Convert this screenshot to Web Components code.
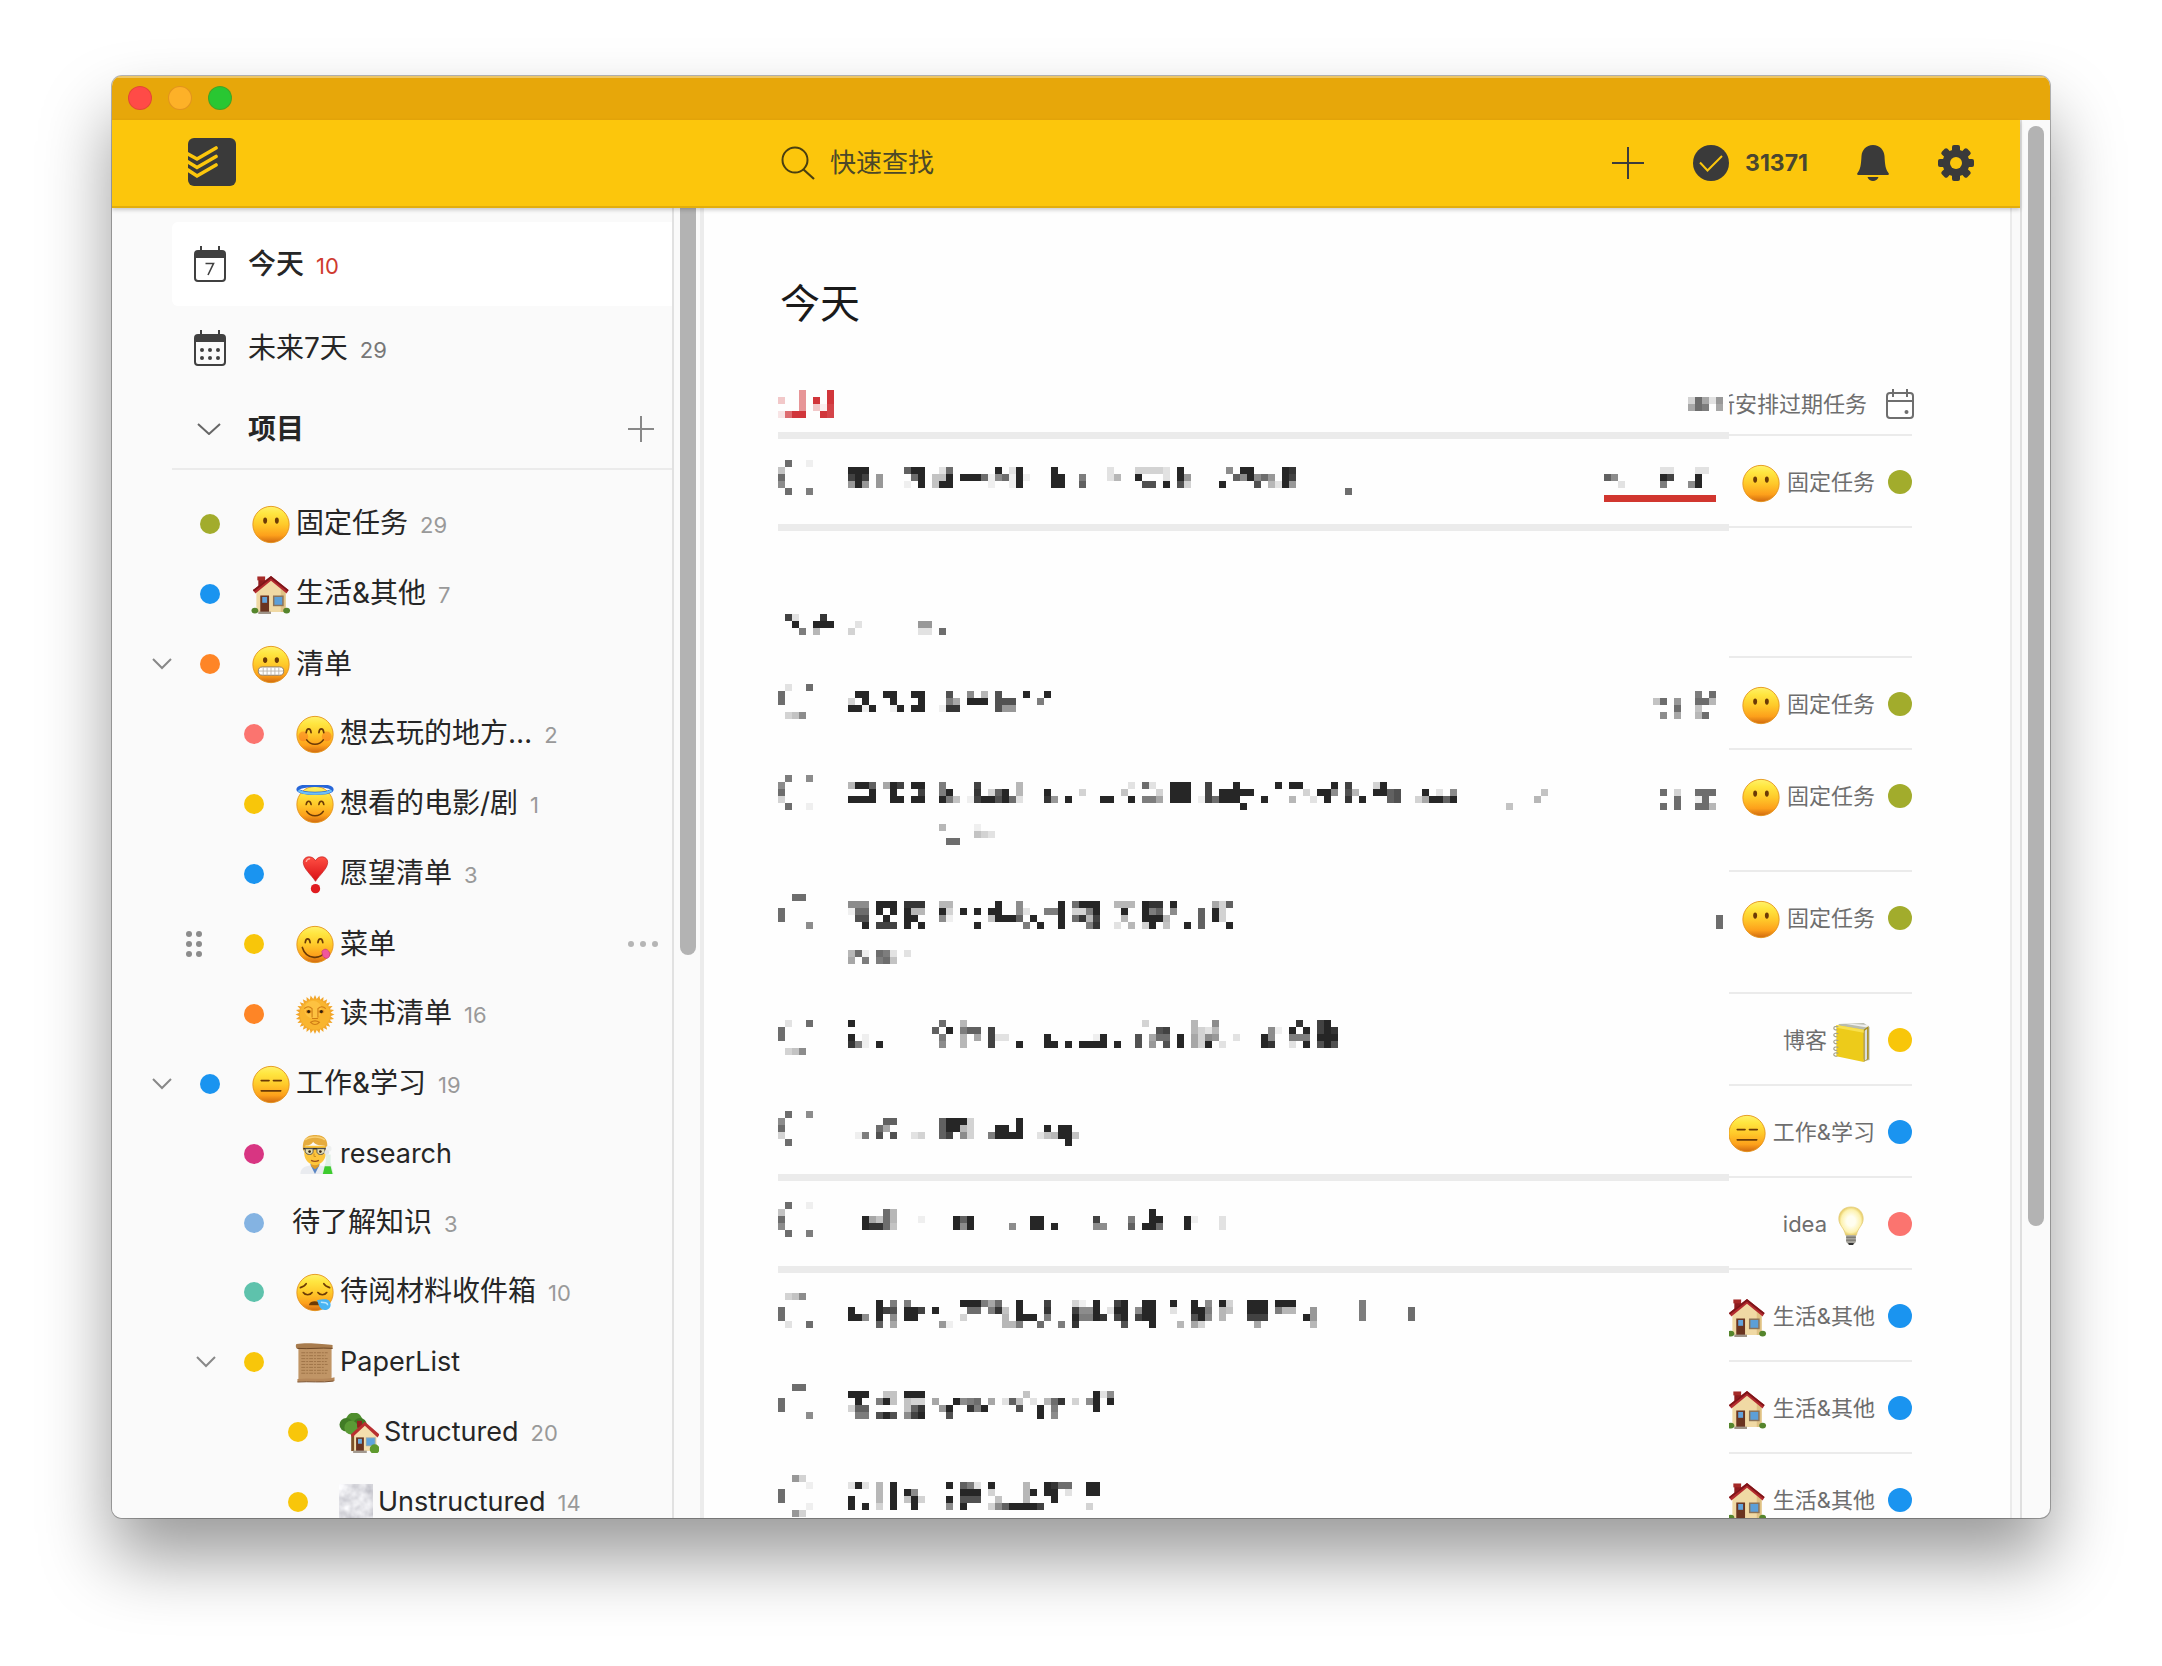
<!DOCTYPE html>
<html lang="zh-CN">
<head>
<meta charset="utf-8">
<title>今天</title>
<style>
  html { height: 100%; }
  body {
    margin: 0; box-sizing: border-box; height: 100vh; padding: 76px 112px 148px;
    display: flex; background: #fff; color: #262626; overflow: hidden;
    font: 28px/40px Inter, "Noto Sans CJK SC", sans-serif;
  }
</style>
</head>
<body>
<app-window>
  <app-header slot="header"></app-header>
  <side-bar slot="side">
    <nav-item current icon="today" count="10">今天</nav-item>
    <nav-item icon="week" count="29">未来7天</nav-item>
    <project-heading>项目</project-heading>
    <project-item color="#a2ac2c" emoji="blank" count="29">固定任务</project-item>
    <project-item color="#1a94f0" emoji="house" count="7">生活&amp;其他</project-item>
    <project-item color="#fe8526" emoji="grimace" open>清单</project-item>
    <project-item level="1" color="#fb746f" emoji="smile" count="2">想去玩的地方…</project-item>
    <project-item level="1" color="#f8c60a" emoji="angel" count="1">想看的电影/剧</project-item>
    <project-item level="1" color="#1a94f0" emoji="heart" count="3">愿望清单</project-item>
    <project-item level="1" color="#f8c60a" emoji="yum" hover>菜单</project-item>
    <project-item level="1" color="#fe8526" emoji="sun" count="16">读书清单</project-item>
    <project-item color="#1a94f0" emoji="dash" count="19" open>工作&amp;学习</project-item>
    <project-item level="1" color="#d83582" emoji="scientist" latin>research</project-item>
    <project-item level="1" color="#84b3e2" count="3" plain>待了解知识</project-item>
    <project-item level="1" color="#5ec2ac" emoji="sleepy" count="10">待阅材料收件箱</project-item>
    <project-item level="1" color="#f8c60a" emoji="scroll" latin open>PaperList</project-item>
    <project-item level="2" color="#f8c60a" emoji="garden" count="20" latin>Structured</project-item>
    <project-item level="2" color="#f8c60a" emoji="fog" count="14" latin>Unstructured</project-item>
  </side-bar>
  <task-board slot="main"></task-board>
</app-window>

<script>
const face = (inner, defs = '') => `
  <defs><linearGradient id="f" x1="0" y1="0" x2="0" y2="1"><stop offset="0" stop-color="#fff16a"/><stop offset=".2" stop-color="#ffe640"/><stop offset=".5" stop-color="#ffc92a"/><stop offset=".8" stop-color="#fda01b"/><stop offset="1" stop-color="#d06a10"/></linearGradient>${defs}</defs>
  <circle cx="20" cy="20" r="18.6" fill="url(#f)" stroke="#e39219" stroke-width=".9"/>${inner}`;
const brown = 'fill="none" stroke="#6b3a06" stroke-width="1.7" stroke-linecap="round"';
const house = `
  <path d="M7 5h7v9l-7 5z" fill="#8e1c1f"/><path d="M6 1.500h8v4H6z" fill="#a52a28"/>
  <path d="M5 17 20 4l15 13v21H5z" fill="#f0d9a4"/><path d="M30 14l5 4v20h-5z" fill="#dfc184"/>
  <path d="M20 1 38 15.500 36 19 20 6 4 19 1.500 15.500z" fill="#b32a2e"/><path d="M20 1 38 15.500l-.8 1.500L20 3.500 2.400 17l-.9-1.500z" fill="#7e1519"/>
  <path d="M9 21h9v17H9z" fill="#6a3420"/><path d="M11 22.500h5v6h-5z" fill="#62a3dc"/><path d="M22 21h11v11H22z" fill="#8c7358"/><path d="M23.500 22.500h8v8h-8z" fill="#5c9fd8"/>
  <path d="M7 37.500h13V40H7z" fill="#9f9488"/><ellipse cx="3.500" cy="36.500" rx="3.500" ry="3" fill="#55852c"/><ellipse cx="36" cy="36.500" rx="3.500" ry="3" fill="#55852c"/>`;
const EMOJI = {
  blank: face('<ellipse cx="14" cy="16" rx="2" ry="3.200" fill="#6b3a06"/><ellipse cx="26" cy="16" rx="2" ry="3.200" fill="#6b3a06"/>'),
  dash: face(`<path d="M10 16h8M22.500 16h8M10 26.500h20" ${brown}/>`),
  grimace: face(`<ellipse cx="14" cy="15.500" rx="2.200" ry="2.900" fill="#6b3a06"/><ellipse cx="26" cy="15.500" rx="2.200" ry="2.900" fill="#6b3a06"/>
    <rect x="7" y="22.500" width="26" height="8.500" rx="4.200" fill="#fff" stroke="#8d7c68"/><path d="M7.500 26.700h25M12 23v8M16 23v8M20 23v8M24 23v8M28 23v8" stroke="#b9b4ac" stroke-width=".9"/>`),
  smile: face(`<circle cx="8" cy="22" r="5" fill="#f86a1f" opacity=".45"/><circle cx="32" cy="22" r="5" fill="#f86a1f" opacity=".45"/>
    <path d="M11 18c.6-5 4.400-5 5 0M24 18c.6-5 4.400-5 5 0M11.500 25.500c4 6 13 6 17 0" ${brown}/>`),
  angel: face(`<path d="M11 20c.6-4.500 4.400-4.500 5 0M24 20c.6-4.500 4.400-4.500 5 0M11.500 27c4 6 13 6 17 0" ${brown}/>
    <ellipse cx="20" cy="4.500" rx="17.500" ry="4" fill="none" stroke="#2766d8" stroke-width="3.200"/><path d="M3 5.500c5 4.500 29 4.500 34 0" fill="none" stroke="#6cc0f7" stroke-width="2.400"/>`),
  yum: face(`<path d="M10 18c.6-5 4.400-5 5 0M23 18c.6-5 4.400-5 5 0M7 23c4 13 20 13 24 3" ${brown}/><path d="M27 27c3-4 7-2 8 2 1 5-4 7-7 3z" fill="#f0579c" stroke="#c93478" stroke-width=".7"/>`),
  sleepy: face(`<path d="M8 20c2 3 7 3 9 0M23 20c2 3 7 3 9 0M5 15c3-1 5-2 6-4M35 15c-3-1-5-2-6-4" ${brown}/><path d="M14 32c1-4 9-4 12-1v2H14z" fill="#6b3a06"/><path d="M22 28c6-1 11-2 13 1 3 6-1 9-5 9-5 0-6-5-8-10z" fill="#49b4f2"/><path d="M26 30c4 0 7 0 7 3" fill="none" stroke="#b8e6ff" stroke-width="1.500"/>`),
  heart: `<defs><linearGradient id="h" x1="0" y1="0" x2="0" y2="1"><stop offset="0" stop-color="#ff5044"/><stop offset="1" stop-color="#d80e14"/></linearGradient></defs>
    <path d="M20.500 27C16 20 8 14 8 7.500 8 .5 18 0 20.500 6 23 0 33 .5 33 7.500 33 14 25 20 20.500 27z" fill="url(#h)" stroke="#c21a1a" stroke-width=".7"/><circle cx="20.500" cy="34.500" r="4.800" fill="#e01b1f"/><path d="M11 7c.4-2 2-3.400 4-3" stroke="#ffb0a4" stroke-width="1.500" fill="none"/>`,
  sun: `<path d="${Array.from({length: 56}, (_, i) => { const a = i * Math.PI / 28, r = i % 2 ? 16 : 20; return (i ? 'L' : 'M') + (20 + r * Math.sin(a)).toFixed(1) + ' ' + (20 - r * Math.cos(a)).toFixed(1); }).join('')}z" fill="#f2a62a"/><circle cx="20" cy="20" r="15.500" fill="#f9b52f"/><circle cx="18" cy="15" r="9" fill="#ffcb4e" opacity=".6"/>
    <ellipse cx="13.500" cy="17" rx="3" ry="2" fill="#e08c1c"/><ellipse cx="26.500" cy="17" rx="3" ry="2" fill="#e08c1c"/><circle cx="13.500" cy="17" r="1.600" fill="#33210c"/><circle cx="26.500" cy="17" r="1.600" fill="#33210c"/><path d="M9 14c3-3 6-2 8 0v9M31 14c-3-3-6-2-8 0v9M17 24h6M15.500 28c3-2 6-2 9 0-3 3-6 3-9 0z" fill="none" stroke="#cf7c15" stroke-width="1.100"/>`,
  scientist: `<path d="M5 40c0-7 6-9 15-9s14 2 14 9z" fill="#e9ebef"/><path d="M15 30h10l-5 10z" fill="#5b86c4"/><path d="M16 26h8v6l-4 3-4-3z" fill="#dd9a28"/>
    <path d="M9 11h22v8c0 7-6 12-11 12S9 26 9 19z" fill="#fcc53c"/><path d="M8 17C6 4 12 0 20 0s15 3 12 17l-2-6c-6 0-10-1-12-4-1 3-5 4-8 4z" fill="#e6ac3e"/><path d="M10 5c5-4 15-4 20 0" fill="none" stroke="#f8d075" stroke-width="1.500"/>
    <path d="M8 14h24" stroke="#2b2d33" stroke-width="1.600"/><path d="M10 14h8v3c0 4-7 4-8 0zM22 14h8v3c-1 4-8 4-8 0z" fill="#e0dcb0" stroke="#484a50" stroke-width=".9"/><circle cx="14.500" cy="17" r="1.400" fill="#3e2817"/><circle cx="25.500" cy="17" r="1.400" fill="#3e2817"/><path d="M16 26c2 1 6 1 8 0" stroke="#9b4e16" stroke-width="1.400" fill="none"/><path d="M19 19v3h2" stroke="#c88b1e" fill="none"/>
    <path d="M31 20h5v8l3 12H27l4-12z" fill="#dbeee2" opacity=".9"/><path d="M30 32h6l2 8H28z" fill="#3ecb2f"/><circle cx="34" cy="14" r="3" fill="#eef0f0"/><circle cx="32" cy="18" r="2.500" fill="#e3e6e6"/>`,
  scroll: `<path d="M3 4h34v33H3z" fill="#c09566"/><path d="M1 1c10-2 30 0 37 1v4C26 4 12 7 2 6 0 5 0 2 1 1z" fill="#a87c4e"/><path d="M2 5.500c12 1 24-1 36 0" stroke="#6c4726" fill="none"/>
    <path d="M2 37c12-2 24 1 35-1l3-1v4c-12 2-26 0-38 1z" fill="#b5875a"/><path d="M2 40c12-1 25 1 37-1" stroke="#7a5230" fill="none"/><path d="M6 10h27M6 13h25M6 16h27M6 19h26M6 22h27M6 25h24M6 28h27M6 31h26" stroke="#9a7045" stroke-width=".9" stroke-dasharray="4 1 2 1"/>`,
  garden: `<path d="M12 18h5v21h-5z" fill="#7c5227"/><circle cx="15" cy="8" r="8.500" fill="#4f8e2d"/><circle cx="7" cy="12" r="7" fill="#417c26"/><circle cx="21" cy="12" r="7" fill="#3f7823"/><circle cx="12" cy="15" r="7" fill="#5a9a35"/>
    <path d="M15 22 26 11l12 12v16H15z" fill="#f5dfae"/><path d="M18 8h5v7h-5z" fill="#94201f"/><path d="M26 9 41 22l-2 3-13-12-13 12-1.500-3z" fill="#b92f30"/><path d="M17 25h8v14h-8z" fill="#6a3420"/><path d="M19 26.500h4v5h-4z" fill="#6ba9dd"/><path d="M27 25h10v9H27z" fill="#94a9b4"/><path d="M28 26h8v7h-8z" fill="#5fa4dc"/><circle cx="36" cy="37" r="5" fill="#5f9a2e"/><path d="M14 38.500h14V41H14z" fill="#a39a90"/>`,
  fog: `<defs><filter id="b" x="0" y="0" width="1" height="1"><feTurbulence type="fractalNoise" baseFrequency=".07" numOctaves="3" seed="4"/><feColorMatrix values=".8 0 0 0 .38 .8 0 0 0 .38 .75 0 0 0 .44 0 0 0 0 1"/></filter></defs><rect x="0" y="2" width="34" height="38" filter="url(#b)"/>`,
  book: `<path d="M7 2 33 1l6 4v34l-5 1z" fill="#b9bcae"/><path d="M9 1l29 2v3z" fill="#eee"/><path d="M5 3l28 5v33L5 35z" fill="#edcb1a"/><path d="M33 8l5-4v34l-5 3z" fill="#a98d19"/><path d="M34 9l2.500-2v31L34 40z" fill="#d9dde0"/><path d="M5 3l28 5v3L5 6z" fill="#f8e04e"/>
    <path d="M7 5c-6-2-6 4-1 3M7 12c-6-2-6 4-1 3M7 19c-6-2-6 4-1 3M7 26c-6-2-6 4-1 3M7 32c-6-2-6 4-1 3" stroke="#a5a28c" stroke-width="1.200" fill="none"/>`,
  bulb: `<defs><radialGradient id="g"><stop offset=".35" stop-color="#fffef0"/><stop offset=".8" stop-color="#fdf2b0"/><stop offset="1" stop-color="#e9cf6c"/></radialGradient></defs>
    <path d="M20 1c8 0 12.500 5.500 12.500 12 0 7-5.500 9-7 17h-11c-1.500-8-7-10-7-17C7.500 6.500 12 1 20 1z" fill="url(#g)" stroke="#e4cd7c" stroke-width=".8"/><path d="M15 30h10v7l-3 3h-4l-3-3z" fill="#a5a39c"/><path d="M15 32h10M15 35h10" stroke="#6d6b66"/><path d="M17 38h6l-1 2h-4z" fill="#333"/>`,
  house
};

const ICONS = {
  today: '<svg width="32" height="36" viewBox="0 0 32 36"><path d="M7 0v6M25 0v6" stroke="#404040" stroke-width="2"/><rect x="1" y="5" width="30" height="30" rx="3" fill="none" stroke="#404040" stroke-width="2"/><path d="M1 5h30v7H1z" fill="#404040"/><path d="M11.500 17.500h8L14 29" fill="none" stroke="#404040" stroke-width="1.600"/></svg>',
  week: '<svg width="32" height="36" viewBox="0 0 32 36"><path d="M7 0v6M25 0v6" stroke="#404040" stroke-width="2"/><rect x="1" y="5" width="30" height="30" rx="3" fill="none" stroke="#404040" stroke-width="2"/><path d="M1 5h30v7H1z" fill="#404040"/><g fill="#404040"><circle cx="8" cy="20" r="2"/><circle cx="16" cy="20" r="2"/><circle cx="24" cy="20" r="2"/><circle cx="8" cy="28" r="2"/><circle cx="16" cy="28" r="2"/><circle cx="24" cy="28" r="2"/></g></svg>',
  chevron: '<svg width="24" height="12" viewBox="0 0 24 12"><path d="M1 1l11 10L23 1" fill="none" stroke="#666" stroke-width="2"/></svg>',
  chevronSmall: '<svg width="20" height="12" viewBox="0 0 20 12"><path d="M1 1l9 9 9-9" fill="none" stroke="#888" stroke-width="2"/></svg>',
  add: '<svg width="26" height="26" viewBox="0 0 26 26"><path d="M13 0v26M0 13h26" stroke="#888" stroke-width="2"/></svg>'
};

const BASE = `<style>
  :host, *, *::before { box-sizing: border-box; }
  button { appearance: none; background: none; border: 0; padding: 0; margin: 0; font: inherit; color: inherit; display: flex; align-items: center; }
  a { color: inherit; text-decoration: none; }
  svg { display: block; flex: none; }
</style>`;

class Base extends HTMLElement {
  connectedCallback() {
    if (this.shadowRoot) return;
    this.attachShadow({ mode: 'open' }).innerHTML = BASE + this.render();
  }
}

customElements.define('emoji-icon', class extends Base {
  render() {
    const name = this.getAttribute('name'), w = name === 'fog' ? 34 : 40;
    return `<style>:host{display:block;flex:none;width:${w}px;height:40px}</style>
      <svg width="${w}" height="40" viewBox="0 0 ${w} 41" role="img">${EMOJI[name]}</svg>`;
  }
});

customElements.define('app-window', class extends Base {
  render() {
    return `<style>
      :host { display: flex; flex-direction: column; flex: 1; min-width: 0; overflow: hidden; border-radius: 10px; background: #fafafa;
        box-shadow: 0 0 0 1px rgba(0,0,0,.28), 0 40px 70px rgba(0,0,0,.4); }
      .title { height: 44px; flex: none; display: flex; align-items: center; gap: 16px; padding: 0 0 2px 16px; background: #e7a70a; border-top: 2px solid #efc765; }
      .title button { width: 24px; height: 24px; border-radius: 50%; border: 1px solid rgba(150,60,0,.25); }
      .body { flex: 1; min-height: 0; display: flex; }
      .page { flex: 1; min-width: 0; display: flex; flex-direction: column; }
      .columns { flex: 1; min-height: 0; display: flex; }
      .track { width: 30px; flex: none; padding: 6px 6px 0; border-left: 2px solid #dfdfdf; }
      .thumb { width: 16px; height: 79%; border-radius: 8px; background: #b3b3b3; }
    </style>
    <div class="title">
      <button aria-label="关闭" style="background:#ff4b47"></button>
      <button aria-label="最小化" style="background:#fdb128"></button>
      <button aria-label="缩放" style="background:#29c732"></button>
    </div>
    <div class="body">
      <div class="page"><slot name="header"></slot><div class="columns"><slot name="side"></slot><slot name="main"></slot></div></div>
      <div class="track"><div class="thumb"></div></div>
    </div>`;
  }
});

customElements.define('app-header', class extends Base {
  render() {
    const teeth = Array.from({ length: 8 }, (_, i) => `<rect x="14" y="0" width="8" height="8" rx="2" transform="rotate(${i * 45} 18 18)"/>`).join('');
    return `<style>
      :host { display: flex; flex: none; height: 88px; align-items: center; background: #fcc60c; border-bottom: 2px solid #e3ae0b; position: relative;
        box-shadow: 0 2px 4px rgba(0,0,0,.2); color: #3c3c3c; }
      .brand { width: 592px; flex: none; padding: 0 0 2px 76px; }
      .search { flex: 1; display: flex; align-items: center; gap: 15px; padding-left: 77px; min-width: 0; }
      input { appearance: none; border: 0; background: none; outline: 0; padding: 0; width: 400px; height: 40px; font: 26px/40px Inter, "Noto Sans CJK SC", sans-serif; color: #4c4828; }
      input::placeholder { color: #4c4828; opacity: 1; }
      .tools { display: flex; align-items: center; gap: 49px; padding-right: 46px; }
      .karma { gap: 16px; font-size: 23px; font-weight: 700; color: #4a4630; }
    </style>
    <a class="brand" href="#home" aria-label="主页"><svg width="48" height="48" viewBox="0 0 48 48"><rect width="48" height="48" rx="6" fill="#3a3a3a"/>
      <g fill="none" stroke="#fcc60c" stroke-width="3.600" stroke-linecap="round"><path d="M0 16l9 5 19-11M0 24l9 5.500 19-11M0 32l9 6 19-11"/></g></svg></a>
    <label class="search"><svg width="34" height="34" viewBox="0 0 34 34" aria-hidden="true"><circle cx="14" cy="14" r="12.500" fill="none" stroke="#4a3f10" stroke-width="2"/><path d="M22.500 23.500L33 33" stroke="#4a3f10" stroke-width="2.200"/></svg>
      <input type="text" placeholder="快速查找" aria-label="快速查找"></label>
    <div class="tools">
      <button aria-label="添加任务"><svg width="32" height="32" viewBox="0 0 32 32"><path d="M16 0v32M0 16h32" stroke="#3c3c3c" stroke-width="2"/></svg></button>
      <button class="karma"><svg width="36" height="36" viewBox="0 0 36 36"><circle cx="18" cy="18" r="18" fill="#3a3a3a"/><path d="M7 17.500l7.500 8L29 11" fill="none" stroke="#fcc60c" stroke-width="2"/></svg>31371</button>
      <button aria-label="通知"><svg width="32" height="36" viewBox="0 0 32 36" fill="#3a3a3a"><path d="M16 0c7 0 11 5 11.500 11 .5 9 1 13 4 17 .8 1.200.3 2-.8 2H1.300c-1.100 0-1.600-.8-.8-2 3-4 3.500-8 4-17C5 5 9 0 16 0zM10.500 32h11c-1.500 5.300-9.500 5.300-11 0z"/></svg></button>
      <button aria-label="设置"><svg width="36" height="36" viewBox="0 0 36 36"><g fill="#3a3a3a">${teeth}<circle cx="18" cy="18" r="13.500"/></g><circle cx="18" cy="18" r="6" fill="#fcc60c"/></svg></button>
    </div>`;
  }
});

customElements.define('side-bar', class extends Base {
  render() {
    return `<style>
      :host { display: flex; flex: none; width: 592px; background: #fafafa; overflow: hidden; }
      nav { flex: 1; min-width: 0; padding-top: 14px; }
      .track { width: 32px; flex: none; padding-left: 6px; border-left: 2px solid #e1e1e1; border-right: 4px solid #ececec; }
      .thumb { width: 16px; height: 57%; border-radius: 0 0 8px 8px; background: #b3b3b3; }
    </style><nav aria-label="项目"><slot></slot></nav><div class="track"><div class="thumb"></div></div>`;
  }
});

customElements.define('nav-item', class extends Base {
  render() {
    return `<style>
      :host { display: block; padding-left: 60px; }
      a { display: flex; align-items: center; height: 84px; padding: 0 0 0 22px; border-radius: 6px 0 0 6px; gap: 22px; }
      :host([current]) a { background: #fff; font-weight: 500; }
      span { display: flex; align-items: baseline; gap: 12px; padding-top: 2px; }
      b { font-size: 22px; font-weight: 400; color: #777; }
      :host([current]) b { color: #cf3a2f; }
    </style><a href="#${this.getAttribute('icon')}">${ICONS[this.getAttribute('icon')]}<span><slot></slot><b>${this.getAttribute('count')}</b></span></a>`;
  }
});

customElements.define('project-heading', class extends Base {
  render() {
    return `<style>
      :host { display: flex; align-items: center; height: 80px; margin: 0 0 19px 60px; padding: 0 18px 0 25px; border-bottom: 2px solid #ebebeb; font-weight: 700; }
      .toggle { flex: 1; gap: 27px; }
    </style><button class="toggle">${ICONS.chevron}<slot></slot></button><button aria-label="添加项目">${ICONS.add}</button>`;
  }
});

customElements.define('project-item', class extends Base {
  render() {
    const e = this.getAttribute('emoji'), n = this.getAttribute('count'), hover = this.hasAttribute('hover');
    const dots = '<svg width="16" height="26" viewBox="0 0 16 26" fill="#8c8c8c"><circle cx="3" cy="3" r="3"/><circle cx="13" cy="3" r="3"/><circle cx="3" cy="13" r="3"/><circle cx="13" cy="13" r="3"/><circle cx="3" cy="23" r="3"/><circle cx="13" cy="23" r="3"/></svg>';
    return `<style>
      :host { display: flex; align-items: center; height: 70px; padding-left: ${38 + 44 * (this.getAttribute('level') || 0)}px; padding-right: 14px; }
      :host([plain]) { height: 68px; }
      .lead { width: 24px; flex: none; display: flex; justify-content: center; }
      :host([hover]) { padding-left: 70px; }
      :host([hover]) .dot { margin-left: 38px; }
      .dot { width: 20px; height: 20px; border-radius: 50%; flex: none; margin-left: 26px; background: ${this.getAttribute('color')}; }
      a { flex: 1; min-width: 0; display: flex; align-items: center; gap: 5px; padding-left: ${e ? 31 : 28}px; }
      emoji-icon { margin: 2px 0 0 0; }
      span { display: flex; align-items: baseline; gap: 12px; white-space: nowrap; }
      :host([latin]) span { font-size: 27px; }
      b { font-size: 22px; font-weight: 400; color: #999; }
    </style>
    <div class="lead">${this.hasAttribute('open') ? `<button aria-label="折叠">${ICONS.chevronSmall}</button>` : hover ? dots : ''}</div>
    <i class="dot"></i>
    <a href="#p">${e ? `<emoji-icon name="${e}"></emoji-icon>` : ''}<span><slot></slot>${n ? `<b>${n}</b>` : ''}</span></a>
    ${hover ? '<button aria-label="更多"><svg width="30" height="6" viewBox="0 0 30 6" fill="#b5b5b5"><circle cx="3" cy="3" r="3"/><circle cx="15" cy="3" r="3"/><circle cx="27" cy="3" r="3"/></svg></button>' : ''}`;
  }
});

/* A strip of 7px cells. Each line is "column:levels ...", a level being a hex opacity. */
const strip = (lines, width, top, from = 0) => {
  let out = '';
  lines.forEach((line, r) => line.split(' ').filter(Boolean).forEach(seg => {
    const [c, s] = seg.split(':');
    [...s].forEach((h, i) => {
      const v = parseInt(h, 16);
      if (v) out += `<rect x="${(+c + i - from) * 7}" y="${top + r * 7}" width="7" height="7" opacity="${(v / 15).toFixed(2)}"/>`;
    });
  }));
  return `<svg width="${width}" height="${top + lines.length * 7}" fill="currentColor" shape-rendering="crispEdges" aria-hidden="true">${out}</svg>`;
};

const TASKS = [
  { top: 26, bar: 1, emoji: 'blank', name: '固定任务', color: '#a2ac2c', due: ['', '126:22 131:22', '118:b8 126:fd 131:f', '120:2 126:9 130:8f'], red: 1,
    px: ['1:a 4:1', '0:4 10:fff 18:bff 23:2a 31:f 33:2f 39:f 47:2 51:33332 57:f 64:8 66:ff 72:fe',
      '0:a 10:dfd 14:7 19:af 22:44f 26:fffa1 31:8a1f1 39:ff 43:9 47:25 51:f 55:2 57:f7 65:b8f8a7 72:fd',
      '0:8 10:7f7 14:7 18:1 20:f 22:4ff 30:1 33:1f 39:ff 43:b 52:cc 55:f 57:c3 63:f 68:c 70:52f7', '1:a 4:9 81:a'] },
  { heading: 1, bar: 1 },
  { top: 28, emoji: 'blank', name: '固定任务', color: '#a2ac2c', due: ['', '131:9 133:a', '125:4a 128:7 131:aa5', '128:a 131:4', '126:8 128:6 131:5a'],
    px: ['1:2 4:a', '0:a 11:ff 15:ff 19:ff 24:c 27:8 29:5 31:c 35:f 38:f', '0:a 10:3 12:f 16:f 20:f 24:96 27:fff 31:ccc 37:9', '10:ff1f 16:1f 19:ff 23:1ee 31:c77', '1:348'] },
  { top: 27, note: 1, emoji: 'blank', name: '固定任务', color: '#a2ac2c', due: ['', '', '126:a 128:3 131:aaa', '128:a 131:1a', '126:a 128:a 131:aa5'],
    px: ['1:9 4:8', '0:8 10:5ffb 15:6fd 19:ff 23:9 28:d 34:5 50:2 52:a2 56:fff 61:d 65:f 71:f 73:ff 79:f 81:d 85:3f',
      '0:a 13:f 16:f 20:d 23:9f 28:e 30:3bf 34:5 38:f 43:3 49:4 54:3 56:fff 61:d 63:fffff 75:3 77:ff8 81:c5 85:ffbc 92:f 94:2 96:8 109:4',
      '0:3 10:ffff 16:ff 19:ff 23:f94 27:1dffcfa2 38:e7 41:f 46:ff 50:f 52:996 56:fff 60:1dafff 69:f 73:5 76:2 78:f 81:e 83:f 87:bc 91:36ffbf 108:5', '1:a 4:1 66:f 104:4', '', '', '23:5 28:1', '28:432', '24:aa'] },
  { top: 24, note: 1, emoji: 'blank', name: '固定任务', color: '#a2ac2c', due: ['', '', '', '134:a', '134:a'],
    px: ['2:aa', '10:888 14:fff 18:eee 23:55 31:f 34:8 40:f 42:afff 48:555 52:fee 56:f 62:63b',
      '0:a 10:1aa 14:f 16:f 18:f55 23:f3 26:f 28:f 30:ff 34:82 38:99f 42:339f 49:f 52:f9b 56:8 60:b 62:f3',
      '0:a 11:cc 15:f 18:ff 23:81 30:4fffb 36:f 40:f 42:ae5d 49:5 52:fff5 60:b 62:f3', '4:8 12:f 14:ddd 18:f 20:f 28:f 35:9 37:f 40:f 44:9e 48:2 50:5 52:3f 55:4 58:f 60:b 64:f', '', '', '', '10:5a1 14:a92 18:2', '10:6 12:9 14:9a4'] },
  { top: 28, after: 1, emoji: 'book', name: '博客', color: '#f8c60a',
    px: ['1:2 4:a 10:f 23:a 26:5 52:3 59:5 62:8 74:e 77:df', '0:a 22:b 24:f 26:9bb 30:d 54:cd 59:5325 70:81 73:f 75:f 77:dfe',
      '0:a 10:f 12:1 23:9 26:5 28:6 30:d22 38:f 45:1f 51:c 53:6aa 57:f 59:6387 65:2 69:f8 73:999 77:fff', '10:e91 14:f 23:8 26:5 30:d 34:f 38:ff 41:f 43:ffff 48:f 51:c 53:7 55:c 57:f 59:63f 63:2 69:fe 73:2 75:f 77:cfc', '1:348'] },
  { top: 27, emoji: 'dash', name: '工作&amp;学习', color: '#1a94f0',
    px: ['1:a 4:8', '0:8 15:bb 23:bfff3 34:f', '0:a 14:a6 23:bff53 31:ff 34:f 38:f 40:ff', '0:3 11:19 14:c 16:c 19:23 23:bd 26:83 30:9ffff 37:245ff4', '1:a 41:f'] },
  { top: 26, bar: 1, after: 1, emoji: 'bulb', name: 'idea', color: '#fb746f',
    px: ['1:a 4:1', '0:4 15:a5 53:f', '0:a 12:f64a5 20:1 25:fbf 36:ff 45:d 50:9 53:ff 58:f1 63:2', '0:8 12:feea4 25:f8f 33:8 36:ff 39:f 45:88 50:b 52:ffa 58:f 63:2', '1:a 4:9'] },
  { top: 25, bar: 1, emoji: 'house', name: '生活&amp;其他', color: '#1a94f0',
    px: ['1:348', '14:f 16:9 18:9 26:fff96a 34:f 38:d 42:31 45:f 48:df 52:ff 56:f 59:f 61:8 63:f3 67:fff 71:fff 83:9',
      '0:a 10:f 14:fdc 18:ffd 22:f 27:aa 30:9e4 34:f 38:e 42:d88f 47:2ff 51:8ff 56:2 59:ff9 63:54 67:fff 71:955 76:7 83:9 90:a',
      '0:a 10:ff8 14:f 16:8 18:ff 26:3 32:5 34:fff 38:9 42:f99fe 48:df 51:dff 59:cf8 63:5 67:ddd 75:f7 83:9 90:a', '1:2 4:a 14:b 16:6 23:71 32:559 37:a 40:9 42:e 49:c 53:f 57:5 59:63 68:6 76:5'] },
  { top: 24, emoji: 'house', name: '生活&amp;其他', color: '#1a94f0',
    px: ['2:aa', '10:fff 15:44 18:fff 35:4 45:f28', '0:a 11:f 14:9f4 18:433 22:6 25:f89a 30:6 32:2b4 36:2 38:5ae 42:3 44:8f 47:f', '0:a 10:3bb 18:4be 23:7f 27:e9f 34:c 37:f 39:9 45:f', '4:8 11:99 14:cfc 18:8df 24:c 37:f 39:8'] },
  { top: 23, emoji: 'house', name: '生活&amp;其他', color: '#1a94f0',
    px: ['2:73', '4:1 10:2f2 14:5 16:f 24:f 26:b92 30:f 35:5 38:feaa 44:ff', '0:a 14:5 16:f 18:f8 26:fff 30:3 35:5f 38:ff 41:2 44:ff', '0:a 10:f 14:5 16:f 18:4f3 24:f 26:ccc 31:4 35:5 39:f', '4:1 10:f 12:f 14:3 16:f 19:f 24:8 26:f 30:38bffffd 44:3', '2:73'] }
];

customElements.define('task-row', class extends Base {
  render() {
    const t = TASKS[this.getAttribute('index')];
    return `<style>
      :host { display: flex; height: ${t.heading ? 130 : t.note ? 122 : 92}px; }
      .left { flex: 1; min-width: 0; display: flex; flex-direction: column; }
      .bar { height: 7px; margin: -2px 0 -5px; background: #ebebeb; flex: none; }
      .cells { display: flex; justify-content: space-between; align-items: flex-start; }
      .due { width: 125px; }
      .red { width: 112px; height: 7px; margin-top: 7px; background: #d1362f; }
      .right { width: 183px; flex: none; overflow: hidden; border-top: 2px solid #ebebeb; }
      a { display: flex; justify-content: flex-end; align-items: center; height: 92px; gap: 13px; font-size: 22px; color: #6e6e6e; white-space: nowrap; }
      span { display: flex; flex: none; align-items: center; gap: ${t.after ? '4px' : '6px'}; flex-direction: ${t.after ? 'row-reverse' : 'row'}; }
      ${t.after ? 'span { padding-right: 4px; }' : ''}
      emoji-icon { margin-top: 4px; }
      i { flex: none; width: 24px; height: 24px; border-radius: 50%; background: ${t.color}; }
    </style>
    <div class="left">${t.bar ? '<div class="bar"></div>' : ''}<div class="cells">
      ${t.heading ? strip(['1:d2 6:e', '2:f 5:fff 11:2 20:77', '3:9 5:5 10:3 20:22 23:a'], 600, 88) : strip(t.px, 770, t.top)}
      ${t.due ? `<div class="due">${strip(t.due, 125, t.top, 118)}${t.red ? '<div class="red"></div>' : ''}</div>` : ''}
    </div></div>
    <div class="right">${t.heading ? '' : `<a href="#project"><span><emoji-icon name="${t.emoji}"></emoji-icon>${t.name}</span><i></i></a>`}</div>`;
  }
});

customElements.define('task-board', class extends Base {
  render() {
    return `<style>
      :host { display: block; flex: 1; min-width: 0; overflow: hidden; background: #fefefe; border-right: 8px solid #fafafa; }
      main { min-height: 100%; padding: 68px 98px 0 74px; border-right: 2px solid #ebebeb; }
      h1 { margin: 0; padding-left: 2px; font-size: 40px; font-weight: 400; line-height: 56px; color: #1a1a1a; }
      .head { display: flex; height: 102px; padding-top: 42px; }
      .late { flex: 1; color: #d1363b; }
      .late svg:last-child { color: #262626; }
      .late { display: flex; justify-content: space-between; }
      button { width: 185px; flex: none; overflow: hidden; justify-content: flex-end; gap: 19px; height: 60px; font-size: 22px; color: #6e6e6e; white-space: nowrap; margin-right: -2px; }
    </style>
    <main><h1>今天</h1>
      <div class="head"><div class="late">
        ${strip(['3:8 7:f', '0:4 3:8 5:f 7:f', '3:8 5:41e', '0:2bff 6:fe'], 60, 16)}
        ${strip(['130:3a627', '130:6a906'], 125, 23, 118)}</div>
        <button><span>新安排过期任务</span><svg width="28" height="30" viewBox="0 0 28 30" fill="none" stroke="#6e6e6e" stroke-width="2"><rect x="1" y="4" width="26" height="25" rx="3"/><path d="M1 12h26M7 0v8M21 0v8"/><circle cx="20.500" cy="23" r="2" fill="#6e6e6e" stroke="none"/></svg></button>
      </div>
      ${TASKS.map((_, i) => `<task-row index="${i}"></task-row>`).join('')}
    </main>`;
  }
});
</script>
</body>
</html>
